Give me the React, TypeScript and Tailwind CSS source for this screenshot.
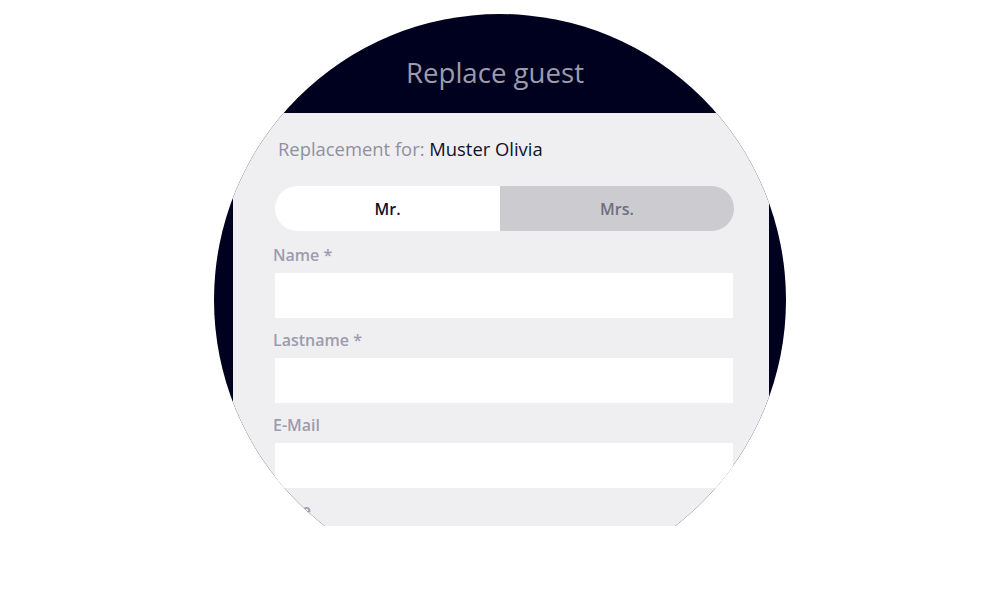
import React from 'react';

const fields = [
  { label: 'Name *', type: 'text' },
  { label: 'Lastname *', type: 'text' },
  { label: 'E-Mail', type: 'email' },
  { label: 'Note', type: 'text' },
];

export default function App() {
  const [salutation, setSalutation] = React.useState<'mr' | 'mrs'>('mr');

  return (
    <div
      className="flex h-[526px] w-full justify-center overflow-hidden bg-white pt-[14px]"
      style={{ fontFamily: '"Open Sans", "Noto Sans", sans-serif' }}
    >
      {/* Round screen */}
      <div className="flex h-[572px] w-[572px] shrink-0 flex-col overflow-hidden rounded-full bg-[#00001f]">
        <header className="flex h-[99px] shrink-0 items-center justify-center pt-[19px] pr-[10px]">
          <h1 className="text-[27.6px] font-normal text-[#9c9cac]">Replace guest</h1>
        </header>

        <main className="ml-[19px] w-[536px] flex-1 bg-[#efeff1] pl-[42px] pt-[23px]">
          <p className="ml-[3px] h-[26px] text-[18.4px] leading-[26px] text-[#8f8f9f]">
            Replacement for: <span className="text-[#11112b]">Muster Olivia</span>
          </p>

          <div className="mt-[24px] flex h-[45px] w-[459px] overflow-hidden rounded-full">
            <button
              onClick={() => setSalutation('mr')}
              className={`w-[225px] text-[16px] font-semibold ${
                salutation === 'mr' ? 'bg-white text-[#11112b]' : 'bg-[#cbcbd0] text-[#6f6f80]'
              }`}
            >
              Mr.
            </button>
            <button
              onClick={() => setSalutation('mrs')}
              className={`w-[234px] text-[16px] font-semibold ${
                salutation === 'mrs' ? 'bg-white text-[#11112b]' : 'bg-[#cbcbd0] text-[#6f6f80]'
              }`}
            >
              Mrs.
            </button>
          </div>

          <form className="mt-[12px] flex flex-col gap-[10px]">
            {fields.map((f) => (
              <label key={f.label} className="flex flex-col">
                <span className="-ml-[2px] h-[24px] text-[16px] font-semibold leading-[24px] text-[#9c9cac]">
                  {f.label}
                </span>
                <input type={f.type} className="mt-[6px] h-[45px] w-[458px] bg-white px-3 outline-none" />
              </label>
            ))}
          </form>
        </main>
      </div>
    </div>
  );
}
